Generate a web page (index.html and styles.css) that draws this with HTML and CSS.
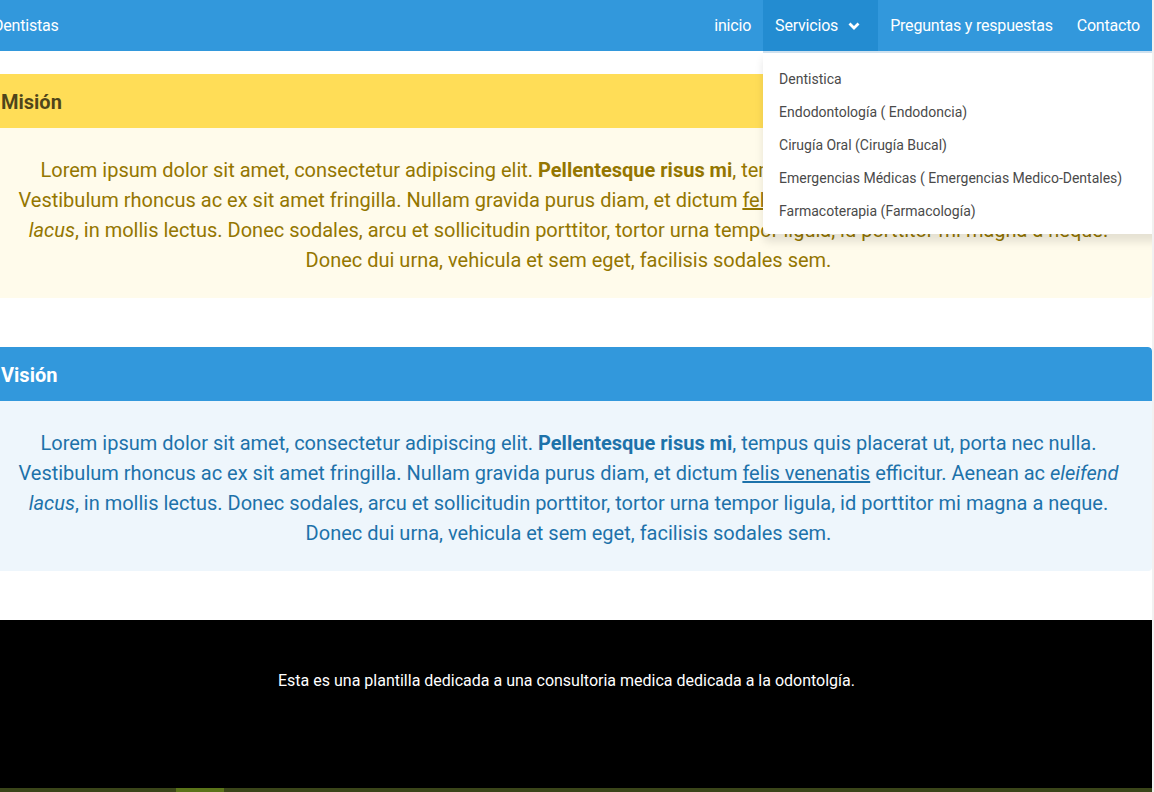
FILE: index.html
```html
<!DOCTYPE html>
<html lang="es">
<head>
<meta charset="utf-8">
<title>Dentistas</title>
<link rel="stylesheet" href="styles.css">
</head>
<body>
<div class="viewport">
  <div class="page">
    <nav class="navbar">
      <div class="navbar-brand">
        <a class="navbar-item">Dentistas</a>
      </div>
      <div class="navbar-end">
        <a class="navbar-item">inicio</a>
        <div class="has-dropdown">
          <a class="navbar-item navbar-link">Servicios
            <span class="icon">
              <svg width="12" height="12" viewBox="0 0 12 12"><path d="M1.5 3.5 L6 8 L10.5 3.5" fill="none" stroke="#fff" stroke-width="2.8" stroke-linejoin="miter"/></svg>
            </span>
          </a>
          <div class="navbar-dropdown">
            <a class="dropdown-item">Dentistica</a>
            <a class="dropdown-item">Endodontología ( Endodoncia)</a>
            <a class="dropdown-item">Cirugía Oral (Cirugía Bucal)</a>
            <a class="dropdown-item">Emergencias Médicas ( Emergencias Medico-Dentales)</a>
            <a class="dropdown-item">Farmacoterapia (Farmacología)</a>
          </div>
        </div>
        <a class="navbar-item">Preguntas y respuestas</a>
        <a class="navbar-item">Contacto</a>
      </div>
    </nav>

    <main class="content">
      <article class="message is-warning">
        <div class="message-header">Misión</div>
        <div class="message-body">
          Lorem ipsum dolor sit amet, consectetur adipiscing elit. <strong>Pellentesque risus mi</strong>, tempus quis placerat ut, porta nec nulla. Vestibulum rhoncus ac ex sit amet fringilla. Nullam gravida purus diam, et dictum <a class="link">felis venenatis</a> efficitur. Aenean ac <em>eleifend lacus</em>, in mollis lectus. Donec sodales, arcu et sollicitudin porttitor, tortor urna tempor ligula, id porttitor mi magna a neque. Donec dui urna, vehicula et sem eget, facilisis sodales sem.
        </div>
      </article>

      <article class="message is-info">
        <div class="message-header">Visión</div>
        <div class="message-body">
          Lorem ipsum dolor sit amet, consectetur adipiscing elit. <strong>Pellentesque risus mi</strong>, tempus quis placerat ut, porta nec nulla. Vestibulum rhoncus ac ex sit amet fringilla. Nullam gravida purus diam, et dictum <a class="link">felis venenatis</a> efficitur. Aenean ac <em>eleifend lacus</em>, in mollis lectus. Donec sodales, arcu et sollicitudin porttitor, tortor urna tempor ligula, id porttitor mi magna a neque. Donec dui urna, vehicula et sem eget, facilisis sodales sem.
        </div>
      </article>
    </main>

    <footer class="footer">
      <p>Esta es una plantilla dedicada a una consultoria medica dedicada a la odontolgía.</p>
    </footer>
  </div>
  <div class="bottom-strip"><span class="seg"></span></div>
</div>
</body>
</html>
```

FILE: styles.css
```css
html, body {
  margin: 0;
  padding: 0;
}
body {
  background: #f1f1f1;
  font-family: Roboto, "Liberation Sans", sans-serif;
  font-size: 16px;
  line-height: 1.5;
  color: #4a4a4a;
  overflow: hidden;
  height: 792px;
}
.viewport {
  width: 1152px;
  height: 792px;
  overflow: hidden;
  background: #fff;
  display: flex;
  flex-direction: column;
}
.page {
  margin-left: -19px;
  width: 1171px;
  flex: 0 0 788px;
  display: flex;
  flex-direction: column;
}

/* Navbar */
.navbar {
  background: #3298dc;
  height: 51px;
  display: flex;
  justify-content: space-between;
  align-items: stretch;
  position: relative;
  z-index: 5;
}
.navbar-brand, .navbar-end {
  display: flex;
  align-items: stretch;
}
.navbar-item {
  color: #fff;
  display: flex;
  align-items: center;
  padding: 0 12px;
  text-decoration: none;
  font-size: 16px;
  letter-spacing: -0.2px;
}
.has-dropdown {
  position: relative;
  display: flex;
  align-items: stretch;
}
.navbar-link {
  background: #238cd1;
  padding-right: 12px;
}
.icon {
  width: 24px;
  height: 24px;
  margin-left: 4px;
  display: inline-flex;
  align-items: center;
  justify-content: center;
}
.icon svg {
  display: block;
}
.navbar-dropdown {
  position: absolute;
  top: 51px;
  left: 0;
  width: 410px;
  background: #fff;
  border-top: 2px solid #cfe1ef;
  border-radius: 0 0 6px 6px;
  box-shadow: 0 8px 8px rgba(10, 10, 10, 0.1);
  padding: 10px 0 6px;
  display: flex;
  flex-direction: column;
}
.dropdown-item {
  font-size: 14px;
  line-height: 21px;
  padding: 6px 16px;
  color: #4a4a4a;
  white-space: nowrap;
}

/* Content */
.content {
  padding-top: 23px;
  flex: 1;
}
.message {
  border-radius: 4px;
  margin-bottom: 49px;
  font-size: 20px;
  overflow: hidden;
}
.message-header {
  font-weight: 700;
  line-height: 1.25;
  padding: 16px 20px 13px;
  border-radius: 4px 4px 0 0;
}
.message-body {
  padding: 27px 30px 23px;
  line-height: 1.5;
  text-align: center;
  border-left: 4px solid;
}
.message-body strong {
  font-weight: 700;
}
.message-body .link {
  color: inherit;
  text-decoration: underline;
}
.is-warning .message-header {
  background: #ffdd57;
  color: rgba(0, 0, 0, 0.7);
}
.is-warning .message-body {
  background: #fffbeb;
  color: #947600;
  border-color: #ffdd57;
}
.is-info .message-header {
  background: #3298dc;
  color: #fff;
}
.is-info .message-body {
  background: #eef6fc;
  color: #1d72aa;
  border-color: #3298dc;
}

/* Footer */
.footer {
  background: #000;
  color: #fff;
  padding: 49px 24px 95px;
  text-align: center;
}
.footer p {
  margin: 0;
  line-height: 24px;
}
.bottom-strip {
  height: 4px;
  background: #3a4519;
  display: flex;
  flex: 0 0 4px;
}
.seg {
  margin-left: 176px;
  width: 48px;
  background: #5a7319;
}
```
